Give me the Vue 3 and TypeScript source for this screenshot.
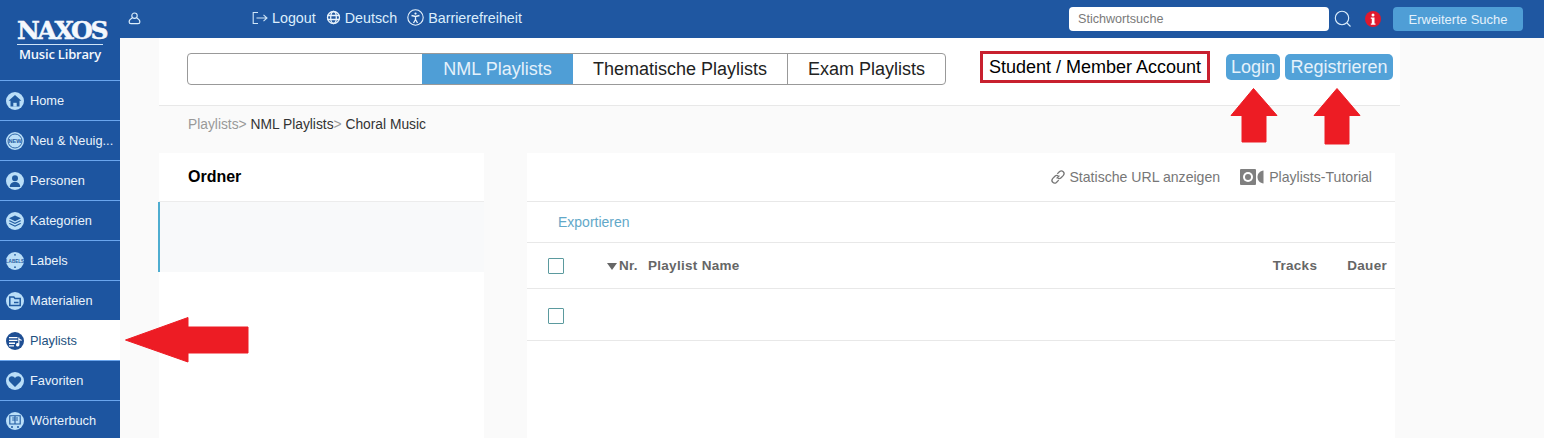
<script setup lang="ts">
interface NavItem { label: string; icon: string; active?: boolean }
const nav: NavItem[] = [
  { label: 'Home', icon: 'home' },
  { label: 'Neu & Neuig...', icon: 'new' },
  { label: 'Personen', icon: 'person' },
  { label: 'Kategorien', icon: 'layers' },
  { label: 'Labels', icon: 'labels' },
  { label: 'Materialien', icon: 'folder' },
  { label: 'Playlists', icon: 'playlist', active: true },
  { label: 'Favoriten', icon: 'heart' },
  { label: 'Wörterbuch', icon: 'dict' },
]
</script>

<template>
  <div class="page">
    <aside class="sidebar">
      <div class="logo">
        <div class="logo-name">NAXOS</div>
        <div class="logo-sub">Music Library</div>
      </div>
      <a v-for="item in nav" :key="item.label" class="nav-item" :class="{ active: item.active }">
        <svg class="nav-icon" viewBox="0 0 18 18">
          <circle cx="9" cy="9" r="9" :fill="item.active ? '#1f4f94' : '#b9def8'" />
          <g v-if="item.icon === 'home'">
            <path d="M9 3 2.600 8.800h1.900v5.800h9V8.800h1.900Z" fill="#1f5aa0" />
            <path d="M7.300 14.600v-3.800h3.400v3.800Z" fill="#b9def8" />
          </g>
          <g v-else-if="item.icon === 'new'">
            <circle cx="9" cy="9" r="7" fill="none" stroke="#1f5aa0" stroke-width=".9" />
            <text x="9" y="11" class="mini-new">NEW</text>
          </g>
          <path v-else-if="item.icon === 'person'" d="M9 3.200a3 3 0 1 1 0 6 3 3 0 0 1 0-6ZM3.800 15c0-3.400 2.200-5 5.200-5s5.200 1.600 5.200 5Z" fill="#1f5aa0" />
          <g v-else-if="item.icon === 'layers'" fill="#1f5aa0">
            <path d="M9 3.400 15 6.300 9 9.200 3 6.300Z" />
            <path d="M3.800 8.300 9 10.800l5.200-2.500 1 .7L9 12 2.800 9Z" />
            <path d="M3.800 11 9 13.500l5.200-2.500 1 .7L9 14.700 2.800 11.700Z" />
          </g>
          <g v-else-if="item.icon === 'labels'">
            <text x="9" y="10.800" class="mini-labels">LABELS</text>
            <circle cx="9" cy="2.800" r=".9" fill="#1f5aa0" />
            <circle cx="9" cy="15.200" r=".9" fill="#1f5aa0" />
          </g>
          <g v-else-if="item.icon === 'folder'" fill="none" stroke="#1f5aa0" stroke-width="1.500">
            <path d="M3.800 13.400V5h4l1.200 1.500h5.200v6.900Z" />
            <path d="M8 10.500h4.500" />
          </g>
          <g v-else-if="item.icon === 'playlist'" fill="#fff">
            <path d="M3 5h8.500v1.300H3ZM3 7.800h8.500v1.300H3ZM3 10.600h6v1.300H3ZM3 13.200h5v1.200H3Z" />
            <path d="M12.300 5.500h1.100v1.300l2.200 1v1.300l-2.200-1v4.700a1.700 1.700 0 1 1-1.100-1.500Z" />
          </g>
          <path v-else-if="item.icon === 'heart'" d="M9 15 3.500 9.500C1.800 7.300 3.200 4.300 5.800 4.300c1.400 0 2.500.7 3.200 1.900.7-1.200 1.800-1.900 3.200-1.900 2.600 0 4 3 2.300 5.200Z" fill="#1f5aa0" />
          <g v-else-if="item.icon === 'dict'" fill="none" stroke="#1f5aa0" stroke-width="1.100">
            <path d="M3.800 3.800h10.400v8.200H3.800ZM6.200 6h2.400M6.200 8h2.400M9.800 6h2.200M9.800 8h2.200M9 3.800V12" />
            <path d="M5 15h2M11 15h2" stroke-width="1.400" />
          </g>
        </svg>
        <span class="nav-label">{{ item.label }}</span>
      </a>
    </aside>

    <div class="right">
      <header class="topbar">
        <svg class="user-icon" viewBox="0 0 14 14" fill="none" stroke="#dceefc" stroke-width="1.200">
          <circle cx="7" cy="4" r="2.900" />
          <path d="M4.500 6.500C2.500 7.500 1.200 9 1.200 10.700c0 1.300.9 1.800 2 1.800h7.600c1.100 0 2-.5 2-1.800 0-1.700-1.300-3.200-3.300-4.200" />
        </svg>
        <nav class="top-links">
          <a class="top-link">
            <svg width="16" height="14" viewBox="0 0 16 14" fill="none" stroke="#cfe6f8" stroke-width="1.100">
              <path d="M6 1.500H1.200v11H6M4.500 7h10.500M11.500 3.800 15 7l-3.500 3.200" />
            </svg>
            Logout
          </a>
          <a class="top-link">
            <svg width="15" height="15" viewBox="0 0 15 15" fill="none" stroke="#e8f3fc" stroke-width="1.300">
              <circle cx="7.500" cy="7.500" r="6" />
              <ellipse cx="7.500" cy="7.500" rx="2.800" ry="6" />
              <path d="M1.500 5.500h12M1.500 9.500h12" />
            </svg>
            Deutsch
          </a>
          <a class="top-link">
            <svg width="17" height="17" viewBox="0 0 17 17" fill="none" stroke="#e8f3fc" stroke-width="1.100">
              <circle cx="8.500" cy="8.500" r="7.700" />
              <circle cx="8.500" cy="4.600" r="1.100" fill="#e8f3fc" stroke="none" />
              <path d="M4.500 6.500 8.500 7.500l4-1M8.500 7.500v3M8.500 10.500 6.500 14M8.500 10.500 10.500 14" stroke-width="1.300" />
            </svg>
            Barrierefreiheit
          </a>
        </nav>
        <div class="top-search">
          <input class="search-input" type="text" placeholder="Stichwortsuche" />
          <svg class="search-icon" width="18" height="18" viewBox="0 0 18 18" fill="none" stroke="#dceefc" stroke-width="1.100">
            <circle cx="8" cy="8" r="6.700" />
            <path d="m13 13 3.500 3.500" />
          </svg>
          <svg class="info-icon" width="16" height="16" viewBox="0 0 16 16">
            <circle cx="8" cy="8" r="8" fill="#e0182d" />
            <circle cx="8" cy="3.900" r="1.500" fill="#fff" />
            <path d="M5.800 6.500h3.700v6h1v1.300H5.800v-1.300h1V7.800h-1Z" fill="#fff" />
          </svg>
          <button class="adv-btn">Erweiterte Suche</button>
        </div>
      </header>

      <main class="main">
        <section class="tab-panel">
          <div class="tabs">
            <div class="tab tab-empty"></div>
            <div class="tab tab-active">NML Playlists</div>
            <div class="tab tab-them">Thematische Playlists</div>
            <div class="tab tab-exam">Exam Playlists</div>
          </div>
          <div class="account">Student / Member Account</div>
          <button class="auth auth-login">Login</button>
          <button class="auth auth-reg">Registrieren</button>
        </section>

        <div class="crumbs">
          <span class="crumb-muted">Playlists&gt; </span><span class="crumb-dark">NML Playlists</span><span class="crumb-muted">&gt; </span><span class="crumb-dark">Choral Music</span>
        </div>

        <div class="columns">
          <section class="folders">
            <h2 class="folders-title">Ordner</h2>
            <div class="folder-row"></div>
          </section>

          <section class="list">
            <div class="list-tools">
              <a class="tool">
                <svg width="16" height="16" viewBox="0 0 16 16" fill="none" stroke="#777" stroke-width="1.300">
                  <path d="M6.600 9.400 9.400 6.600" />
                  <path d="M7.300 4.900 9.600 2.600a2.700 2.700 0 0 1 3.800 3.800l-2.300 2.300a2.700 2.700 0 0 1-3.300.4" />
                  <path d="M8.700 11.100 6.400 13.400a2.700 2.700 0 0 1-3.800-3.800l2.300-2.300a2.700 2.700 0 0 1 3.300-.4" />
                </svg>
                Statische URL anzeigen
              </a>
              <a class="tool tool-video">
                <svg width="24" height="16" viewBox="0 0 24 16">
                  <rect x="0" y="0" width="16" height="16" rx="1" fill="#808080" />
                  <circle cx="8" cy="8" r="5" fill="#fff" />
                  <circle cx="8" cy="8" r="3" fill="#808080" />
                  <path d="M23.500 1.500v13c-3.500-.5-6-3-6-6.500s2.500-6 6-6.500Z" fill="#808080" />
                </svg>
                Playlists-Tutorial
              </a>
            </div>
            <div class="export-row"><a class="export">Exportieren</a></div>
            <div class="table-row head-row">
              <span class="check"></span>
              <span class="sort-arrow"></span>
              <span class="col-nr">Nr.</span>
              <span class="col-name">Playlist Name</span>
              <span class="col-tracks">Tracks</span>
              <span class="col-dur">Dauer</span>
            </div>
            <div class="table-row body-row">
              <span class="check"></span>
            </div>
          </section>
        </div>
      </main>
    </div>

    <svg class="annotations" width="1544" height="438" viewBox="0 0 1544 438">
      <g fill="#ed1c24" stroke="#ed1c24" stroke-width="1" stroke-linejoin="round">
        <path d="M125.500 340 188 317.500V327h60v26h-60v9Z" />
        <path d="M1253.500 88.500 1277 115.500h-11V142h-24v-26.500h-11Z" />
        <path d="M1337 88.500 1360 115.500h-11V144h-24v-28.500h-11Z" />
      </g>
    </svg>
  </div>
</template>

<style scoped>
.page {
  position: relative;
  display: flex;
  width: 1544px;
  height: 438px;
  overflow: hidden;
  background: #fafafa;
  font-family: "Liberation Sans", Arial, sans-serif;
}
.sidebar {
  flex: 0 0 120px;
  width: 120px;
  min-width: 0;
  overflow: hidden;
  background: #1d55a0;
}
.logo {
  height: 80px;
  box-sizing: border-box;
  padding-top: 17px;
  color: #f4f8fd;
  text-align: center;
}
.logo-name {
  width: 86px;
  margin: 0 auto;
  border-bottom: 1px solid #cfe4f8;
  font-family: "DejaVu Serif", serif;
  font-weight: 700;
  font-size: 25px;
  line-height: 27px;
  letter-spacing: -2.4px;
  white-space: nowrap;
  -webkit-text-stroke: 0.5px #f4f8fd;
}
.logo-sub {
  margin-top: 1px;
  font-family: "Open Sans", sans-serif;
  font-weight: 600;
  font-size: 13px;
  line-height: 16px;
  letter-spacing: -0.2px;
  white-space: nowrap;
}
.nav-item {
  display: flex;
  align-items: center;
  gap: 6px;
  box-sizing: border-box;
  width: 120px;
  height: 40px;
  padding-left: 6px;
  border-top: 1px solid #6aa6ee;
  color: #e9f3fb;
  font-size: 12.8px;
}
.nav-item.active {
  background: #fff;
  border-top-color: #fff;
  color: #22517f;
}
.nav-icon {
  flex: 0 0 18px;
  width: 18px;
  height: 18px;
}
.mini-new {
  font: 700 5.600px "Liberation Sans", sans-serif;
  fill: #1f5aa0;
  text-anchor: middle;
}
.mini-labels {
  font: 700 4.600px "Liberation Sans", sans-serif;
  fill: #1f5aa0;
  text-anchor: middle;
}
.nav-label {
  white-space: nowrap;
}
.right {
  flex: 1;
  min-width: 0;
}
.topbar {
  display: flex;
  align-items: center;
  height: 38px;
  box-sizing: border-box;
  padding-left: 8px;
  padding-right: 21px;
  background: #1f57a1;
}
.user-icon {
  width: 13px;
  height: 13px;
  margin-top: -2px;
}
.top-links {
  display: flex;
  align-items: center;
  gap: 10px;
  margin-left: 111px;
  margin-top: -3px;
}
.top-link {
  display: flex;
  align-items: center;
  gap: 4px;
  color: #dceefc;
  font-size: 14.3px;
}
.top-search {
  display: flex;
  align-items: center;
  margin-left: auto;
}
.search-input {
  box-sizing: border-box;
  width: 260px;
  height: 24px;
  padding: 0 9px;
  border: 0;
  border-radius: 4px;
  background: #fff;
  font: 12.6px "Liberation Sans", sans-serif;
  outline: none;
}
.search-input::placeholder {
  color: #7a7a7a;
  opacity: 1;
}
.search-icon {
  margin-left: 5px;
}
.info-icon {
  margin-left: 13px;
}
.adv-btn {
  width: 130px;
  height: 24px;
  margin-left: 12px;
  border: 0;
  border-radius: 4px;
  background: #4f9ed6;
  color: #e4f1fb;
  font: 13px "Liberation Sans", sans-serif;
}
.main {
  padding-left: 39px;
}
.tab-panel {
  display: flex;
  align-items: flex-start;
  box-sizing: border-box;
  width: 1241px;
  height: 68px;
  padding: 13px 0 0 28px;
  background: #fff;
  border-bottom: 1px solid #e8e8e8;
}
.tabs {
  display: flex;
  box-sizing: border-box;
  width: 759px;
  height: 32px;
  margin-top: 2px;
  border: 1px solid #999;
  border-radius: 4px;
  overflow: hidden;
}
.tab {
  display: flex;
  align-items: center;
  justify-content: center;
  box-sizing: border-box;
  height: 100%;
  color: #222;
  font-size: 18px;
}
.tab-empty { width: 234px; }
.tab-active {
  width: 151px;
  background: #4f9ed6;
  color: #e4f1fb;
}
.tab-them {
  width: 215px;
  border-right: 1px solid #999;
}
.tab-exam { flex: 1; }
.account {
  box-sizing: border-box;
  width: 230px;
  height: 32px;
  margin-left: 34px;
  border: 3px solid #c8202f;
  color: #000;
  font-size: 18px;
  line-height: 26px;
  text-align: center;
  white-space: nowrap;
}
.auth {
  height: 26px;
  margin-top: 3px;
  padding: 0;
  border: 0;
  border-radius: 5px;
  background: #52a2d8;
  color: #e4f1fb;
  font: 18px "Liberation Sans", sans-serif;
}
.auth-login {
  width: 54px;
  margin-left: 16px;
}
.auth-reg {
  width: 108px;
  margin-left: 5px;
}
.crumbs {
  height: 47px;
  padding-left: 29px;
  font-size: 13.8px;
  line-height: 37px;
  white-space: pre;
}
.crumb-muted { color: #999; }
.crumb-dark { color: #333; }
.columns {
  display: flex;
  align-items: flex-start;
}
.folders {
  box-sizing: border-box;
  width: 325px;
  height: 290px;
  background: #fff;
}
.folders-title {
  height: 49px;
  box-sizing: border-box;
  margin: 0;
  padding-left: 29px;
  border-bottom: 1px solid #ececec;
  color: #000;
  font-size: 16px;
  line-height: 47px;
}
.folder-row {
  box-sizing: border-box;
  height: 70px;
  margin-left: -1px;
  border-left: 2px solid #4fadd0;
  background: #f8f9fa;
}
.list {
  width: 868px;
  height: 290px;
  margin-left: 43px;
  background: #fff;
}
.list-tools {
  display: flex;
  align-items: center;
  justify-content: flex-end;
  gap: 20px;
  box-sizing: border-box;
  height: 49px;
  padding-right: 23px;
  border-bottom: 1px solid #e8e8e8;
}
.tool {
  display: flex;
  align-items: center;
  gap: 3px;
  color: #777;
  font-size: 14.100px;
}
.tool-video { gap: 5px; }
.export-row {
  display: flex;
  align-items: center;
  box-sizing: border-box;
  height: 41px;
  padding-left: 31px;
  border-bottom: 1px solid #e8e8e8;
}
.export {
  color: #62a8c8;
  font-size: 14px;
}
.table-row {
  display: flex;
  align-items: center;
  box-sizing: border-box;
  padding-left: 21px;
  border-bottom: 1px solid #e8e8e8;
}
.head-row {
  height: 46px;
  color: #666;
  font-size: 13.5px;
  font-weight: 700;
  letter-spacing: 0.3px;
}
.body-row {
  height: 52px;
  padding-top: 2px;
}
.check {
  flex: 0 0 16px;
  box-sizing: border-box;
  width: 16px;
  height: 16px;
  border: 1px solid #5b9a9e;
  border-radius: 1px;
}
.sort-arrow {
  width: 0;
  height: 0;
  margin-left: 43px;
  margin-top: 2px;
  border-left: 5px solid transparent;
  border-right: 5px solid transparent;
  border-top: 7px solid #666;
}
.col-nr { margin-left: 2px; }
.col-name { margin-left: 10px; }
.col-tracks { margin-left: auto; }
.col-dur {
  margin-left: 30px;
  margin-right: 8px;
}
.annotations {
  position: absolute;
  top: 0;
  left: 0;
  pointer-events: none;
}
</style>
